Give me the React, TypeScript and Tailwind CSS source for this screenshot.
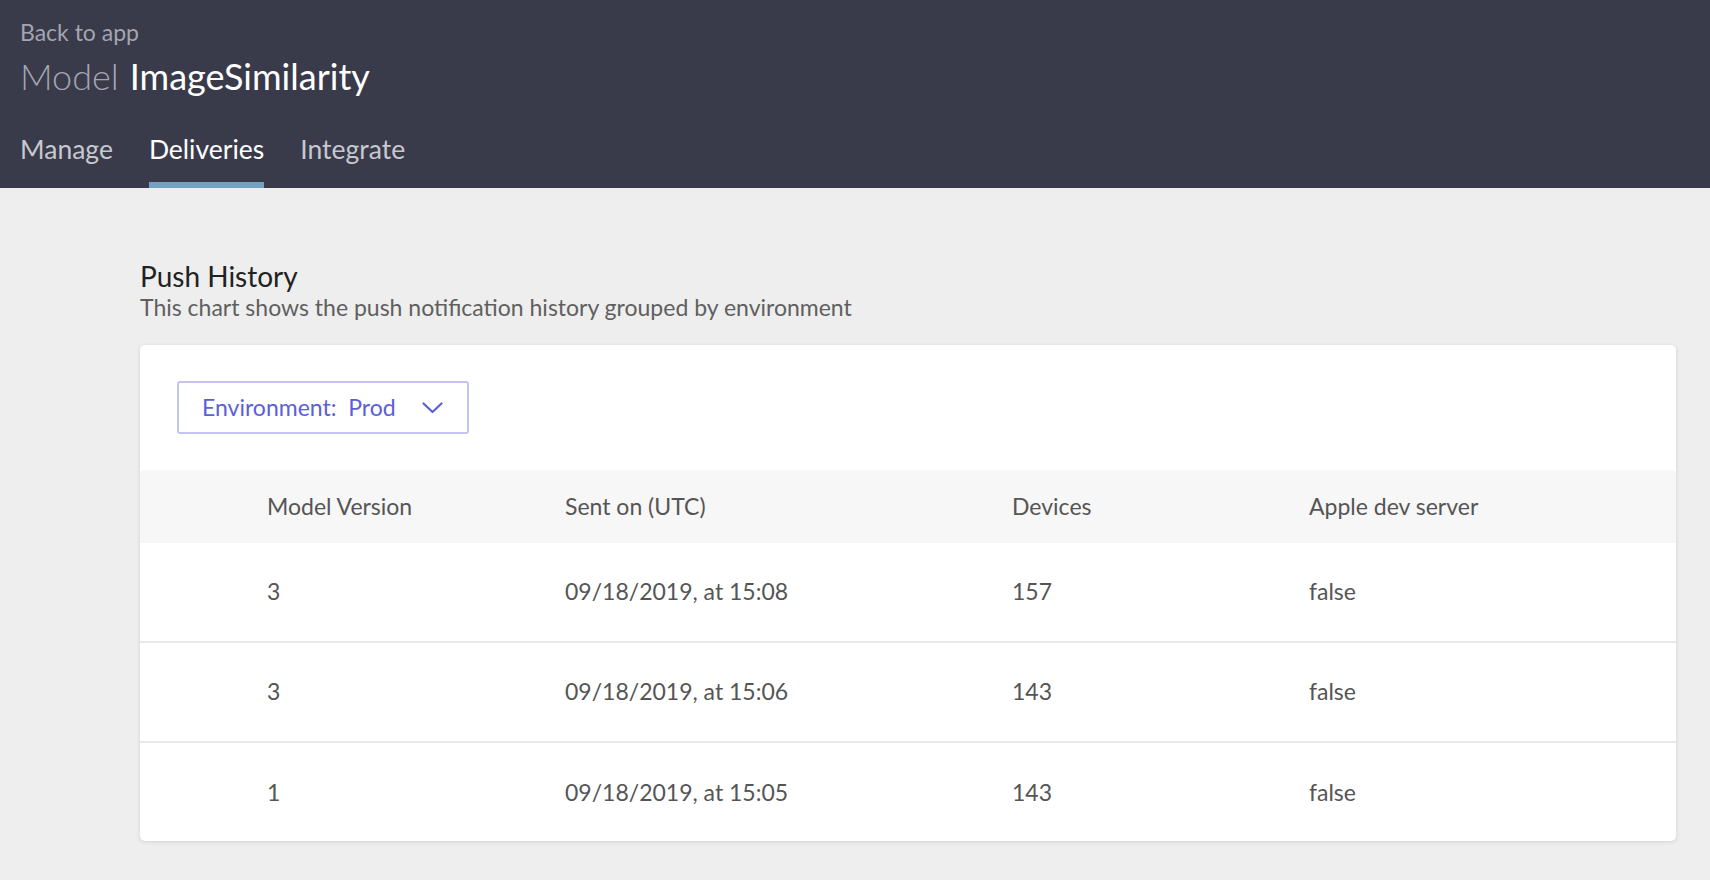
import { FC } from "react";

interface pushRow {
	version: string;
	sentOn: string;
	devices: number;
	appleDev: boolean;
}

const rows: pushRow[] = [
	{ version: "3", sentOn: "09/18/2019, at 15:08", devices: 157, appleDev: false },
	{ version: "3", sentOn: "09/18/2019, at 15:06", devices: 143, appleDev: false },
	{ version: "1", sentOn: "09/18/2019, at 15:05", devices: 143, appleDev: false },
];

const tabs = ["Manage", "Deliveries", "Integrate"];

const Header: FC = () => {
	return (
		<div className="bg-[#393a4a] px-[20px] pt-[18px] h-[188px] flex flex-col">
			<a className="text-[23px] leading-[28px] text-[#a4a5b0] w-fit">Back to app</a>
			<h1 className="mt-[9px] text-[36px] leading-[42px] flex gap-[11px]">
				<span className="font-light text-[#a4a5b0]">Model</span>
				<span className="text-white">ImageSimilarity</span>
			</h1>
			<div className="mt-auto flex gap-[36px]">
				{tabs.map((tab) => (
					<div key={tab} className="flex flex-col">
						<span
							className={
								tab === "Deliveries"
									? "text-[26.5px] leading-[32px] text-white"
									: "text-[26.5px] leading-[32px] text-[#c7c8d0]"
							}>
							{tab}
						</span>
						<div
							className={
								tab === "Deliveries"
									? "mt-[17px] h-[6px] bg-[#73a1c1]"
									: "mt-[17px] h-[6px]"
							}
						/>
					</div>
				))}
			</div>
		</div>
	);
};

const EnvironmentSelect: FC = () => {
	return (
		<button className="w-[292px] h-[53px] border-2 border-[#c4c4f3] rounded-[3px] flex items-center pl-[23px] pr-[24px] text-[23px] text-[#5b60d8]">
			<span className="whitespace-pre">Environment:  Prod</span>
			<svg className="ml-auto" width="21" height="12" viewBox="0 0 21 12" fill="none">
				<path d="M1.5 1.5 L10.5 10 L19.5 1.5" stroke="#5b60d8" strokeWidth="2.2" strokeLinecap="round" strokeLinejoin="round" />
			</svg>
		</button>
	);
};

const PushTable: FC = () => {
	return (
		<div className="mt-[36px]">
			<div className="grid grid-cols-[298px_447px_297px_1fr] pl-[127px] h-[73px] items-center bg-[#f7f7f7] text-[23px] text-[#555555] rounded-t-[4px]">
				<span>Model Version</span>
				<span>Sent on (UTC)</span>
				<span>Devices</span>
				<span>Apple dev server</span>
			</div>
			{rows.map((row, i) => (
				<div
					key={i}
					className={
						i < rows.length - 1
							? "grid grid-cols-[298px_447px_297px_1fr] pl-[127px] h-[100px] pb-[1px] items-center border-b-2 border-[#e9e9e9] text-[23px] text-[#555555]"
							: "grid grid-cols-[298px_447px_297px_1fr] pl-[127px] h-[98px] items-center text-[23px] text-[#555555]"
					}>
					<span>{row.version}</span>
					<span>{row.sentOn}</span>
					<span>{row.devices}</span>
					<span>{String(row.appleDev)}</span>
				</div>
			))}
		</div>
	);
};

const App: FC = () => {
	return (
		<div className="min-h-[880px] bg-[#eeeeee] font-['Lato','Noto_Sans',sans-serif]">
			<Header />
			<main className="ml-[140px] mr-[34px] pt-[71px]">
				<h2 className="text-[28px] leading-[34px] text-[#222222]">Push History</h2>
				<p className="text-[23px] leading-[28px] text-[#5f5f5f]">
					This chart shows the push notification history grouped by environment
				</p>
				<div className="mt-[24px] bg-white rounded-[5px] shadow-[0_1px_4px_rgba(0,0,0,0.12)] pt-[36px] overflow-hidden">
					<div className="pl-[37px]">
						<EnvironmentSelect />
					</div>
					<PushTable />
				</div>
			</main>
		</div>
	);
};

export default App;
